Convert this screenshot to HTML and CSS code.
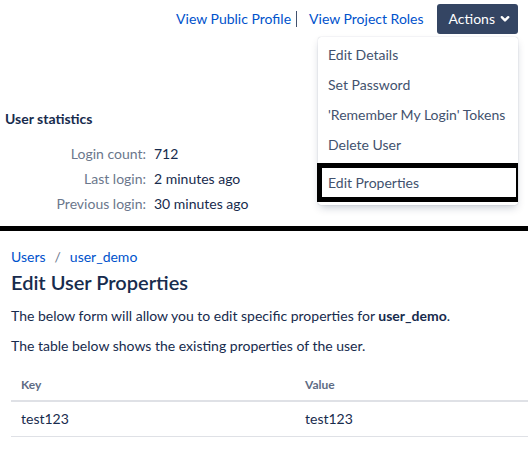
FILE: index.html
```html
<!DOCTYPE html>
<html lang="en">
<head>
<meta charset="utf-8">
<title>Edit User Properties</title>
<link rel="stylesheet" href="styles.css">
</head>
<body>
<div class="top">
  <div class="toolbar">
    <a class="link" href="#">View Public Profile</a>
    <span class="sep"></span>
    <a class="link link-roles" href="#">View Project Roles</a>
    <button class="actions" type="button">Actions
      <svg class="chev" width="10" height="8" viewBox="0 0 10 8"><path d="M1.8 2.2 L5 5.4 L8.2 2.2" fill="none" stroke="#fff" stroke-width="2.4" stroke-linecap="round" stroke-linejoin="round"/></svg>
    </button>
  </div>
  <div class="stats">
    <h3 class="stats-title">User statistics</h3>
    <dl class="stats-grid">
      <dt>Login count:</dt><dd>712</dd>
      <dt>Last login:</dt><dd>2 minutes ago</dd>
      <dt>Previous login:</dt><dd>30 minutes ago</dd>
    </dl>
  </div>
  <ul class="menu">
    <li class="menu-item">Edit Details</li>
    <li class="menu-item">Set Password</li>
    <li class="menu-item">'Remember My Login' Tokens</li>
    <li class="menu-item">Delete User</li>
    <li class="menu-item menu-item-focus">Edit Properties</li>
  </ul>
</div>
<div class="divider"></div>
<div class="bottom">
  <nav class="crumbs">
    <a class="link" href="#">Users</a>
    <span class="crumb-sep">/</span>
    <a class="link" href="#">user_demo</a>
  </nav>
  <h1 class="title">Edit User Properties</h1>
  <p class="para">The below form will allow you to edit specific properties for <strong>user_demo</strong>.</p>
  <p class="para">The table below shows the existing properties of the user.</p>
  <table class="props">
    <thead>
      <tr><th class="col-key">Key</th><th>Value</th></tr>
    </thead>
    <tbody>
      <tr><td>test123</td><td>test123</td></tr>
    </tbody>
  </table>
</div>
</body>
</html>
```
FILE: styles.css
```css
* { box-sizing: border-box; }
html, body { margin: 0; padding: 0; background: #fff; }
body {
  font-family: "Segoe UI", Lato, "Noto Sans", sans-serif;
  font-size: 14px;
  line-height: 20px;
  color: #172b4d;
}
.top {
  position: relative;
  height: 226px;
}
.toolbar {
  display: flex;
  justify-content: flex-end;
  align-items: center;
  padding: 4px 14px 0 0;
  height: 34px;
}
.link {
  color: #0052cc;
  text-decoration: none;
}
.sep {
  width: 1px;
  height: 16px;
  background: #42526e;
  margin: 0 12px 0 5px;
}
.link-roles { margin-right: 13px; }
.actions {
  display: flex;
  align-items: center;
  gap: 5px;
  height: 30px;
  padding: 0 8px 0 12px;
  border: 0;
  border-radius: 3px;
  background: #344563;
  color: #fff;
  font: inherit;
  font-size: 14px;
}
.chev { display: block; }
.stats {
  padding: 0 0 0 5px;
}
.stats-title {
  margin: 75px 0 0;
  font-size: 14px;
  font-weight: 700;
  line-height: 20px;
}
.stats-grid {
  display: grid;
  grid-template-columns: 141px auto;
  column-gap: 8px;
  margin: 12px 0 0 0;
  line-height: 25px;
}
.stats-grid dt {
  text-align: right;
  color: #6b778c;
}
.stats-grid dd { margin: 0; }
.menu {
  position: absolute;
  left: 318px;
  top: 37px;
  width: 200px;
  margin: 0;
  padding: 3px 0 3px;
  list-style: none;
  background: #fff;
  border-radius: 3px;
  box-shadow: 0 4px 8px -2px rgba(9, 30, 66, 0.25), 0 0 1px rgba(9, 30, 66, 0.31);
}
.menu-item {
  padding: 0 10px;
  line-height: 30px;
  color: #42526e;
  white-space: nowrap;
}
.menu-item-focus {
  margin: 3px 0 0 -1px;
  padding: 0 0 0 6px;
  line-height: 29px;
  border: 5px solid #000;
  border-right-width: 2px;
}
.divider {
  width: 528px;
  height: 5px;
  background: #000;
}
.bottom {
  padding: 16px 0 0 11px;
}
.crumbs {
  display: flex;
  align-items: center;
  line-height: 20px;
}
.crumb-sep {
  color: #6b778c;
  margin: 0 9px;
}
.title {
  margin: 3px 0 0;
  font-size: 20px;
  font-weight: 600;
  line-height: 24px;
  color: #172b4d;
}
.para {
  margin: 12px 0 0;
}
.para + .para { margin-top: 10px; }
.props {
  margin-top: 15px;
  width: 517px;
  border-collapse: collapse;
}
.props th {
  text-align: left;
  font-size: 12px;
  font-weight: 700;
  color: #5e6c84;
  padding: 4px 10px 5px;
  line-height: 20px;
  border-bottom: 2px solid #dfe1e6;
}
.col-key { width: 284px; }
.props td {
  padding: 7px 10px;
  line-height: 20px;
  border-bottom: 1px solid #dfe1e6;
}
```
